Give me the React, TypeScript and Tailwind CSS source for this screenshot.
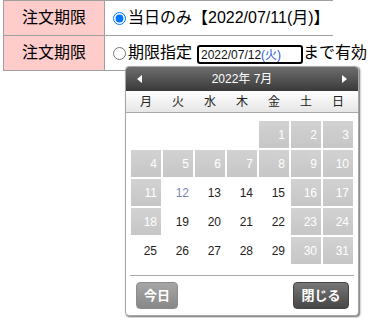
import React from 'react';

// July 2022, weeks start on Monday
const weeks: (number | null)[][] = [
  [null, null, null, null, 1, 2, 3],
  [4, 5, 6, 7, 8, 9, 10],
  [11, 12, 13, 14, 15, 16, 17],
  [18, 19, 20, 21, 22, 23, 24],
  [25, 26, 27, 28, 29, 30, 31],
];

const selectable = [12, 13, 14, 15, 19, 20, 21, 22, 25, 26, 27, 28, 29];
const weekdays = ['月', '火', '水', '木', '金', '土', '日'];

const font = { fontFamily: '"Liberation Sans", "Noto Sans CJK JP", sans-serif' };

const DayCell = ({ day }: { day: number | null }) => {
  if (day === null) return <div className="h-[27px]" />;
  if (!selectable.includes(day)) {
    return (
      <div className="h-[27px] flex items-center justify-end pr-[4px] bg-gradient-to-b from-[#d2d2d2] to-[#c6c6c6] text-white text-[12px]">
        {day}
      </div>
    );
  }
  return (
    <div
      className={`h-[27px] flex items-center justify-end pr-[4px] text-[12px] ${
        day === 12 ? 'text-[#7d84b6]' : 'text-[#222]'
      }`}
    >
      {day}
    </div>
  );
};

const DatePicker = () => (
  <div
    className="absolute left-[125px] top-[66px] w-[234px] h-[250px] bg-white border border-[#a8a8a8] rounded-[4px] shadow-[1px_1px_2px_rgba(0,0,0,0.6)] flex flex-col"
    style={font}
  >
    <div className="h-[24px] flex items-center justify-between px-[11px] rounded-t-[3px] bg-gradient-to-b from-[#6e6e6e] to-[#3a3a3a] text-white">
      <span className="w-0 h-0 border-y-[4px] border-y-transparent border-r-[5px] border-r-white" />
      <span className="text-[12px]">2022年 7月</span>
      <span className="w-0 h-0 border-y-[4px] border-y-transparent border-l-[5px] border-l-white" />
    </div>
    <div className="h-[22px] border-b border-[#a8a8a8] bg-gradient-to-b from-white to-[#e6e6e6] px-[5px] grid grid-cols-[repeat(7,30px)] gap-x-[2px] items-center text-[12px] text-[#222]">
      {weekdays.map((w) => (
        <span key={w} className="text-center">{w}</span>
      ))}
    </div>
    <div className="mt-[8px] px-[5px] grid grid-cols-[repeat(7,30px)] gap-[2px]">
      {weeks.flat().map((d, i) => (
        <DayCell key={i} day={d} />
      ))}
    </div>
    <div className="mt-[11px] mx-[4px] border-t border-[#aaaaaa]" />
    <div className="mt-[6px] flex justify-between pl-[10px] pr-[9px]">
      <button className="w-[42px] h-[27px] rounded-[4px] border border-[#8c8c8c] bg-gradient-to-b from-[#a6a6a6] to-[#888888] text-white text-[13px] font-bold">
        今日
      </button>
      <button className="w-[56px] h-[27px] rounded-[4px] border border-[#444] bg-gradient-to-b from-[#777777] to-[#474747] text-white text-[13px] font-bold">
        閉じる
      </button>
    </div>
  </div>
);

const App = () => {
  return (
    <div className="relative w-[369px] h-[318px] bg-white text-black overflow-hidden" style={font}>
      <div className="ml-[3px] w-[330px] border-t border-l border-[#a0a0a0] text-[16px]">
        <div className="flex h-[35px] border-b border-[#a0a0a0]">
          <div className="w-[101px] shrink-0 bg-[#ffcccc] border-r border-[#a0a0a0] flex items-center justify-center">
            注文期限
          </div>
          <div className="flex items-center whitespace-nowrap">
            <input type="radio" name="limit" defaultChecked className="m-0 ml-[8px] mr-[2px] w-[13px] h-[13px]" />
            <span>当日のみ【2022/07/11(月)】</span>
          </div>
        </div>
        <div className="flex h-[35px] border-b border-[#a0a0a0]">
          <div className="w-[101px] shrink-0 bg-[#ffcccc] border-r border-[#a0a0a0] flex items-center justify-center">
            注文期限
          </div>
          <div className="flex items-center whitespace-nowrap">
            <input type="radio" name="limit" className="m-0 ml-[8px] mr-[2px] w-[13px] h-[13px]" />
            <span>期限指定</span>
            <div className="ml-[5px] mt-[3px] w-[106px] h-[19px] border-2 border-black rounded-[3px] flex items-center pl-[2px] text-[12px] bg-white">
              <span className="text-[#111]">2022/07/12</span>
              <span className="text-[#2a5bd8]">(火)</span>
            </div>
            <span>まで有効</span>
          </div>
        </div>
      </div>
      <DatePicker />
    </div>
  );
};

export default App;
